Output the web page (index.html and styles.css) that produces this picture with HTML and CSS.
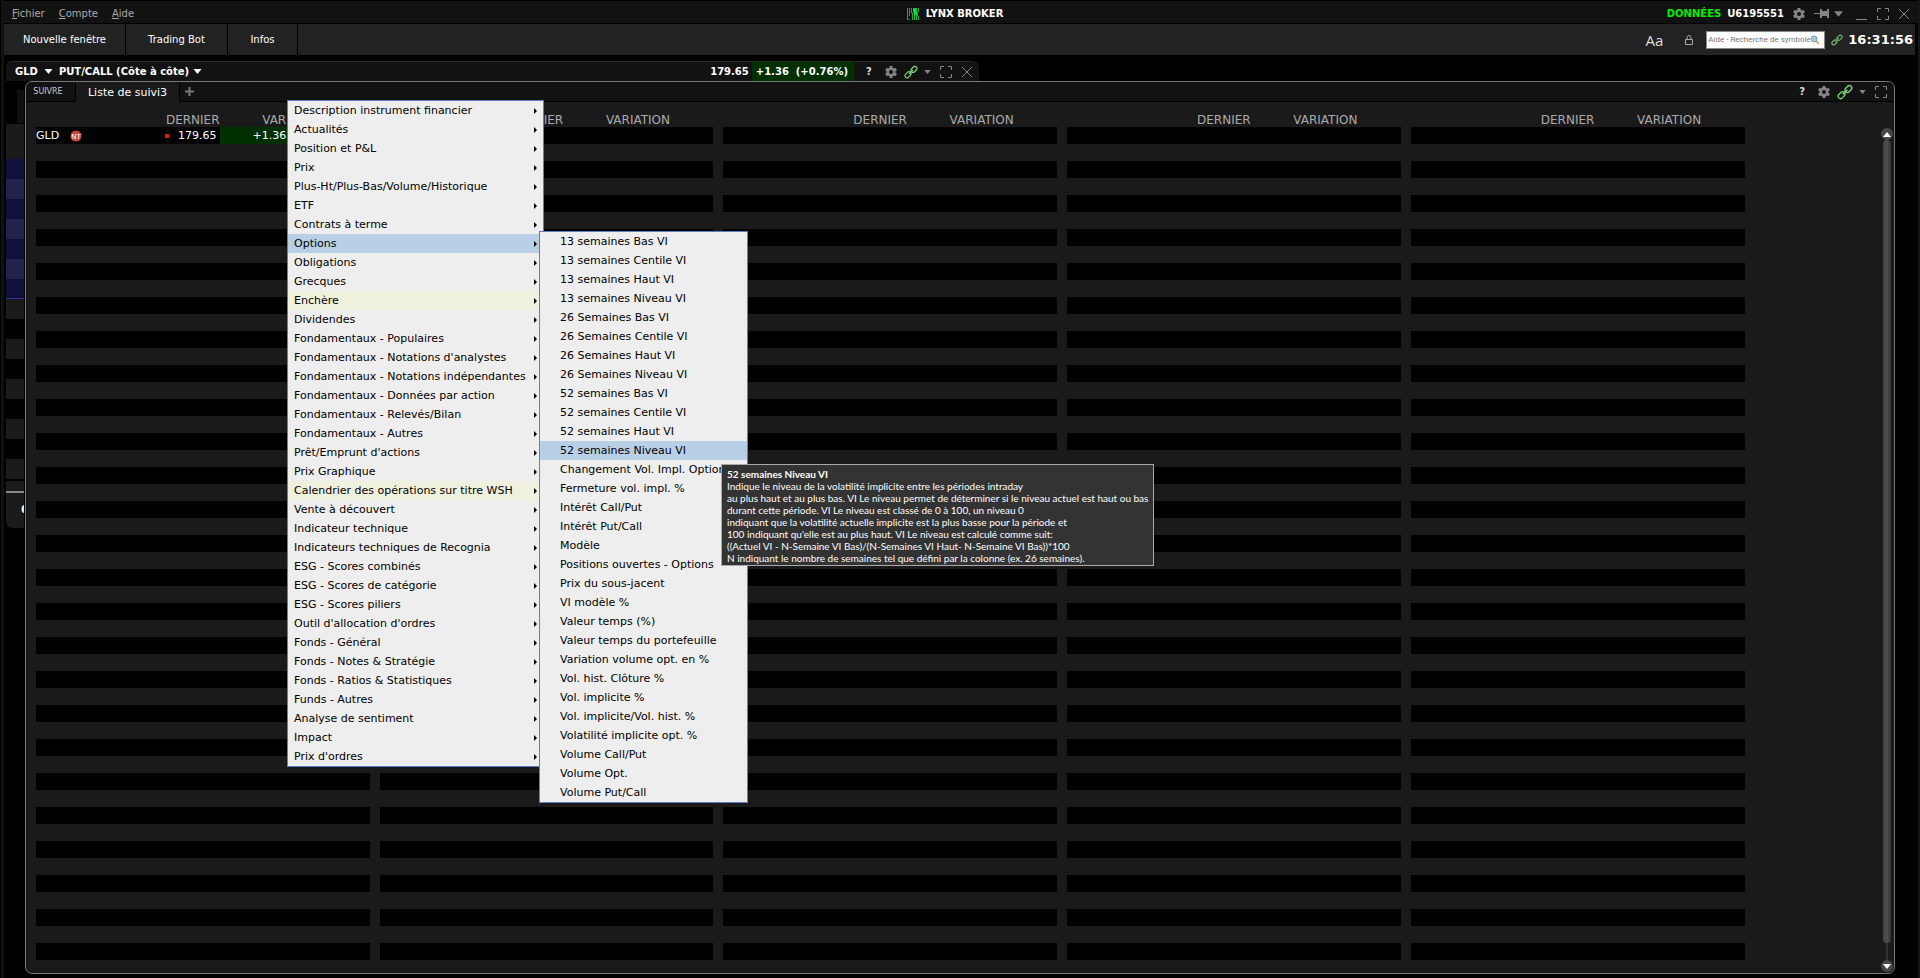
FILE: index.html
```html
<!DOCTYPE html>
<html lang="fr">
<head>
    <meta charset="UTF-8">
    <title>LYNX BROKER</title>
    <link rel="stylesheet" href="styles.css">
</head>
<body>
    <!-- shared icons -->
    <svg class="sprite" width="0" height="0">
        <symbol id="gear" viewBox="0 0 12 12">
            <g fill="#858585">
                <rect x="4.5" y="0" width="3" height="12"/>
                <rect x="4.5" y="0" width="3" height="12" transform="rotate(60 6 6)"/>
                <rect x="4.5" y="0" width="3" height="12" transform="rotate(120 6 6)"/>
            </g>
            <circle cx="6" cy="6" r="3.3" fill="none" stroke="#858585" stroke-width="2.4"/>
            <circle cx="6" cy="6" r="2" fill="#121212"/>
        </symbol>
        <symbol id="link" viewBox="0 0 16 16">
            <g fill="none" stroke="#7fd67f" stroke-width="1.3" stroke-linecap="round">
                <rect x="7.6" y="2.6" width="7.6" height="4.8" rx="2.4" transform="rotate(-45 11.4 5)"/>
                <rect x="0.8" y="8.8" width="7.6" height="4.8" rx="2.4" transform="rotate(-45 4.6 11.2)"/>
                <path d="M6 10 L10 6"/>
            </g>
        </symbol>
        <symbol id="caret" viewBox="0 0 8 5"><path d="M0 0H8L4 5Z" fill="currentColor"/></symbol>
        <symbol id="full" viewBox="0 0 12 12">
            <path d="M.5 4V.5H4M8 .5H11.5V4M11.5 8V11.5H8M4 11.5H.5V8" fill="none" stroke="#858585"/>
        </symbol>
        <symbol id="close" viewBox="0 0 12 12"><path d="M1 1L11 11M11 1L1 11" fill="none" stroke="#858585"/></symbol>
    </svg>

    <header class="titlebar">
        <nav class="menubar">
            <a href="#"><u>F</u>ichier</a>
            <a href="#"><u>C</u>ompte</a>
            <a href="#"><u>A</u>ide</a>
        </nav>
        <div class="brand">
            <svg width="12" height="12" viewBox="0 0 12 12">
                <path d="M.5 0V11.5H3M2.5 0V8M4.5 0V5H6M5.5 5V12M11.5 0V4M10.5 4V8M11.5 8V12" fill="none" stroke="#14a850"/>
                <path d="M6 0H10V12H9V7H8V12H7V4H6Z" fill="#10c040"/>
                <path d="M7 1H8V7H7Z" fill="#20f050"/>
            </svg>
            <h1>LYNX BROKER</h1>
        </div>
        <div class="account">
            <span class="live">DONNÉES</span>
            <span class="user">U6195551</span>
            <button class="icon" type="button" aria-label="Configuration"><svg width="12" height="12"><use href="#gear"/></svg></button>
            <button class="icon pin" type="button" aria-label="Épingler">
                <svg width="16" height="9" viewBox="0 0 16 9"><path d="M0 4H6V5H0ZM6 0H8V2H13V0H15V9H13V7H8V9H6Z" fill="#858585"/></svg>
                <svg width="9" height="6"><use href="#caret"/></svg>
            </button>
            <button class="icon" type="button" aria-label="Réduire"><svg width="12" height="12"><path d="M0 11.5H11" stroke="#858585"/></svg></button>
            <button class="icon" type="button" aria-label="Agrandir"><svg width="12" height="12"><use href="#full"/></svg></button>
            <button class="icon" type="button" aria-label="Fermer"><svg width="12" height="12"><use href="#close"/></svg></button>
        </div>
    </header>

    <div class="toolbar">
        <button class="tool new" type="button">Nouvelle fenêtre</button>
        <button class="tool bot" type="button">Trading Bot</button>
        <button class="tool infos" type="button">Infos</button>
        <div class="tools-right">
            <button class="icon font-size" type="button">Aa</button>
            <button class="icon" type="button" aria-label="Verrouiller">
                <svg width="8" height="10" viewBox="0 0 8 10"><path d="M.5 4.5H7.5V9.5H.5ZM2 4.5V3Q2 .5 4 .5T6 3V4.5" fill="none" stroke="#aaa"/></svg>
            </button>
            <label class="search">
                <input type="text" aria-label="Recherche" placeholder="Aide - Recherche de symbole">
                <svg width="10" height="10" viewBox="0 0 10 10">
                    <path d="M6 6L9 9" stroke="#d99a4a" stroke-width="1.6"/>
                    <circle cx="4" cy="4" r="3" fill="#a8cbe2" stroke="#7c97a8"/>
                </svg>
            </label>
            <svg width="12" height="12"><use href="#link"/></svg>
            <time class="clock">16:31:56</time>
        </div>
    </div>

    <main class="workspace">
        <div class="quotebar">
            <button class="icon symbol" type="button">GLD <svg width="9" height="5"><use href="#caret"/></svg></button>
            <button class="icon symbol" type="button">PUT/CALL (Côte à côte) <svg width="9" height="5"><use href="#caret"/></svg></button>
            <span class="last">179.65</span>
            <span class="change">+1.36&nbsp; (+0.76%)</span>
            <div class="controls">
                <button class="icon help" type="button">?</button>
                <button class="icon" type="button" aria-label="Configuration"><svg width="12" height="12"><use href="#gear"/></svg></button>
                <button class="icon linked" type="button" aria-label="Lier"><svg width="14" height="14"><use href="#link"/></svg><svg width="7" height="4"><use href="#caret"/></svg></button>
                <button class="icon" type="button" aria-label="Agrandir"><svg width="12" height="12"><use href="#full"/></svg></button>
                <button class="icon" type="button" aria-label="Fermer"><svg width="12" height="12"><use href="#close"/></svg></button>
            </div>
        </div>

        <div class="windows">
            <!-- visible edge of the option chain window -->
            <div class="chain">
                <div class="chain-head"></div>
                <div class="chain-sub"></div>
                <div class="chain-calls"></div>
                <div class="chain-puts"></div>
                <div class="chain-gap"></div>
                <div class="chain-foot">6</div>
            </div>

            <section class="panel">
                <div class="tabs">
                    <button class="tab" type="button">SUIVRE</button>
                    <button class="tab active" type="button">Liste de suivi3</button>
                    <button class="icon add" type="button" aria-label="Ajouter"><svg width="9" height="9"><path d="M4.5 0V9M0 4.5H9" stroke="#777" stroke-width="2"/></svg></button>
                    <div class="controls">
                        <button class="icon help" type="button">?</button>
                        <button class="icon" type="button" aria-label="Configuration"><svg width="12" height="12"><use href="#gear"/></svg></button>
                        <button class="icon linked" type="button" aria-label="Lier"><svg width="16" height="16"><use href="#link"/></svg><svg width="7" height="4"><use href="#caret"/></svg></button>
                        <button class="icon" type="button" aria-label="Agrandir"><svg width="12" height="12"><use href="#full"/></svg></button>
                    </div>
                </div>
                <div class="content">
                    <div class="lists" id="lists"></div>
                    <div class="scrollbar">
                        <button class="round" type="button" aria-label="Haut"><svg width="8" height="5"><path d="M0 5H8L4 0Z" fill="#fff"/></svg></button>
                        <div class="thumb"></div>
                        <div class="track"></div>
                        <button class="round" type="button" aria-label="Bas"><svg width="8" height="5"><path d="M0 0H8L4 5Z" fill="#fff"/></svg></button>
                    </div>
                </div>
            </section>
        </div>
    </main>

    <ul class="menu" id="menu"></ul>

    <div class="tooltip" role="tooltip">
        <b>52 semaines Niveau VI</b><br>
        Indique le niveau de la volatilité implicite entre les périodes intraday<br>
        au plus haut et au plus bas. VI Le niveau permet de déterminer si le niveau actuel est haut ou bas<br>
        durant cette période. VI Le niveau est classé de 0 à 100, un niveau 0<br>
        indiquant que la volatilité actuelle implicite est la plus basse pour la période et<br>
        100 indiquant qu'elle est au plus haut. VI Le niveau est calculé comme suit:<br>
        ((Actuel VI - N-Semaine VI Bas)/(N-Semaines VI Haut- N-Semaine VI Bas))*100<br>
        N indiquant le nombre de semaines tel que défini par la colonne (ex. 26 semaines).
    </div>

    <script src="script.js"></script>
</body>
</html>
```

FILE: styles.css
```css
* {
    box-sizing: border-box;
}
body {
    margin: 0;
    height: 100vh;
    display: flex;
    flex-direction: column;
    overflow: hidden;
    padding: 1px 4px 0;
    background: #000;
    border-left: 1px solid #000;
    border-right: 2px solid #151515;
    color: #fff;
    font-family: "DejaVu Sans", Verdana, sans-serif;
    font-size: 11px;
    box-shadow: inset 3px 0 #111;
}
button {
    margin: 0;
    padding: 0;
    border: 0;
    background: none;
    color: inherit;
    font: inherit;
}
svg {
    display: block;
    flex: none;
}
.sprite {
    position: absolute;
}
.icon {
    display: flex;
    align-items: center;
    color: #858585;
}

/* title bar */
.titlebar {
    display: grid;
    grid-template-columns: 1fr auto 1fr;
    align-items: center;
    flex: none;
    height: 22px;
    margin: 0 -4px;
    padding: 3px 8px 0 11px;
    background: #121212;
    font-size: 10px;
}
.menubar {
    display: flex;
    gap: 14px;
}
.menubar a {
    color: #aaa;
    text-decoration: none;
}
.brand {
    display: flex;
    align-items: center;
    gap: 7px;
    padding-right: 12px;
}
.brand h1 {
    margin: 0;
    font-size: 10px;
}
.account {
    display: flex;
    align-items: center;
    justify-content: flex-end;
    gap: 9px;
    font-weight: bold;
}
.live {
    color: #00f000;
    margin-right: -3px;
}
.pin {
    gap: 4px;
    margin-right: 4px;
}

/* toolbar */
.toolbar {
    display: flex;
    flex: none;
    height: 31px;
    margin: 1px -1px 0;
    padding-right: 2px;
    background: #222;
}
.tool {
    border-right: 1px solid #000;
    font-size: 10px;
}
.new {
    width: 122px;
}
.bot {
    width: 102px;
}
.infos {
    width: 70px;
}
.tools-right {
    display: flex;
    align-items: center;
    margin-left: auto;
}
.font-size {
    margin-right: 22px;
    color: #ddd;
    font: 15px "Open Sans", sans-serif;
}
.search {
    display: flex;
    align-items: center;
    width: 119px;
    height: 18px;
    margin: 0 6px 0 13px;
    padding: 0 4px 0 1px;
    border: 1px solid #888;
    background: #fff;
}
.search input {
    flex: 1;
    min-width: 0;
    padding: 0;
    border: 0;
    outline: 0;
    background: none;
    font: 8px Roboto, sans-serif;
}
.search input::placeholder {
    color: #777;
}
.clock {
    margin-left: 5px;
    font-size: 13px;
    font-weight: bold;
}

/* workspace */
.workspace {
    flex: 1;
    min-height: 0;
    display: flex;
    flex-direction: column;
    padding: 6px 19px 4px 1px;
}
.quotebar {
    display: flex;
    align-items: center;
    flex: none;
    width: 51.5%;
    margin-right: auto;
    height: 20px;
    padding: 0 6px 0 9px;
    border-top: 1px solid #2a2a2a;
    border-radius: 6px 8px 0 0;
    background: #121212;
    font-size: 10px;
    font-weight: bold;
}
.symbol {
    gap: 6px;
    margin-right: 6px;
    color: #fff;
}
.symbol + .symbol {
    gap: 4px;
}
.last {
    margin-left: auto;
}
.change {
    align-self: stretch;
    margin: 0 12px 0 3px;
    padding: 0 6px 0 4px;
    background: #003000;
    line-height: 19px;
}
.controls {
    display: flex;
    align-items: center;
    gap: 9px;
}
.help {
    margin-right: 4px;
    color: #ddd;
    font-size: 10px;
    font-weight: bold;
}
.linked {
    gap: 6px;
    margin-left: -2px;
}

.windows {
    flex: 1;
    min-height: 0;
    display: flex;
}
.chain {
    width: 18px;
    flex: none;
    margin-right: 1px;
}
.chain-head {
    height: 33px;
    margin: 9px 0 0 11px;
    background: #101010;
}
.chain-sub {
    height: 35px;
    margin-top: 1px;
    background: #1a1a1a;
}
.chain-calls {
    height: 140px;
    border-bottom: 1px solid #3030a0;
    background: repeating-linear-gradient(#10103c 0 20px, #22224a 20px 40px);
}
.chain-puts {
    height: 180px;
    background: repeating-linear-gradient(#1a1a1a 0 20px, #000 20px 40px);
}
.chain-gap {
    height: 12px;
    margin-top: 2px;
    border-bottom: 2px solid #888;
    background: #1a1a1a;
}
.chain-foot {
    height: 35px;
    padding-left: 15px;
    overflow: hidden;
    border-bottom-left-radius: 6px;
    background: #1a1a1a;
    font-size: 10px;
    font-weight: bold;
    line-height: 34px;
}

/* watchlist */
.panel {
    flex: 1;
    min-width: 0;
    display: flex;
    flex-direction: column;
    overflow: hidden;
    border: 1px solid #777;
    border-radius: 7px;
    background: #1a1a1a;
}
.tabs {
    display: flex;
    align-items: center;
    flex: none;
    height: 20px;
    padding-right: 7px;
    border-bottom: 1px solid #000;
    background: #121212;
}
.tab {
    width: 50px;
    height: 20px;
    padding-right: 5px;
    border-right: 1px solid #000;
    color: #ccc;
    font-size: 8px;
}
.tab.active {
    width: 104px;
    margin-bottom: -1px;
    padding: 0;
    background: #1a1a1a;
    color: #fff;
    font-size: 11px;
}
.add {
    margin-left: 5px;
}
.tabs .controls {
    margin-left: auto;
}
.content {
    flex: 1;
    min-height: 0;
    display: flex;
    justify-content: space-between;
}
.lists {
    display: grid;
    grid-template-columns: repeat(5, 1fr);
    gap: 10px;
    width: 92%;
    padding: 8px 0 0 10px;
}
.list {
    width: 100%;
    align-self: start;
    border-collapse: collapse;
    table-layout: fixed;
}
.list th,
.list td {
    height: 17px;
    padding: 0;
    text-align: right;
    line-height: 17px;
}
.list th {
    padding-top: 3px;
    color: #aaa;
    font-size: 12px;
    font-weight: normal;
    line-height: 14px;
}
.list td + td {
    padding-right: 3px;
}
.list tbody tr:nth-child(odd) {
    background: #000;
}
.list .name {
    width: 33%;
    text-align: left;
}
.list .price {
    width: 22%;
}
.list .var {
    width: 32%;
}
.list td.up {
    padding-right: 40px;
    background: #003000;
}
.ticker {
    display: flex;
    align-items: center;
    gap: 11px;
}
.tick {
    display: inline-block;
    width: 4px;
    height: 4px;
    margin: 0 9px 1px 0;
    background: #e01818;
}
.scrollbar {
    display: flex;
    flex-direction: column;
    align-items: center;
    width: 12px;
    margin: 26px 1px 1px 0;
}
.round {
    display: flex;
    align-items: center;
    justify-content: center;
    flex: none;
    width: 12px;
    height: 12px;
    border-radius: 50%;
    background: #484848;
}
.thumb {
    flex: 1;
    width: 8px;
    border-radius: 4px;
    background: linear-gradient(90deg, #444, #505050, #333);
}
.track {
    width: 2px;
    height: 17px;
    background: #333;
}

/* column menus */
.menu {
    position: absolute;
    top: 100px;
    left: 287px;
    width: 257px;
    margin: 0;
    padding: 0;
    list-style: none;
    border: 1px solid #5a7fc4;
    background: #eee;
    color: #000;
}
.menu li {
    position: relative;
}
.item {
    display: flex;
    align-items: center;
    justify-content: space-between;
    width: 100%;
    height: 19px;
    padding: 0 6px;
    white-space: nowrap;
    overflow: hidden;
}
.item::after {
    content: "";
    border-left: 3px solid #000;
    border-top: 3px solid transparent;
    border-bottom: 3px solid transparent;
}
.item.selected {
    background: #b8cfe6;
}
.item.notable {
    background: #f0f0de;
}
.submenu {
    top: -3px;
    left: 251px;
    width: 209px;
    z-index: 1;
}
.submenu .item {
    padding: 0 20px;
}
.submenu .item::after {
    display: none;
}

.tooltip {
    position: absolute;
    top: 464px;
    left: 721px;
    z-index: 2;
    padding: 3px 5px 1px;
    border: 1px solid #aaa;
    background: #333;
    font: 10px/12px Lato, "Liberation Sans", sans-serif;
    white-space: nowrap;
}
```

FILE: script.js
```js
var columns = [
    "Description instrument financier", "Actualités", "Position et P&L", "Prix",
    "Plus-Ht/Plus-Bas/Volume/Historique", "ETF", "Contrats à terme", "Options",
    "Obligations", "Grecques", "Enchère", "Dividendes", "Fondamentaux - Populaires",
    "Fondamentaux - Notations d'analystes", "Fondamentaux - Notations indépendantes",
    "Fondamentaux - Données par action", "Fondamentaux - Relevés/Bilan",
    "Fondamentaux - Autres", "Prêt/Emprunt d'actions", "Prix Graphique",
    "Calendrier des opérations sur titre WSH", "Vente à découvert",
    "Indicateur technique", "Indicateurs techniques de Recognia",
    "ESG - Scores combinés", "ESG - Scores de catégorie", "ESG - Scores piliers",
    "Outil d'allocation d'ordres", "Fonds - Général", "Fonds - Notes & Stratégie",
    "Fonds - Ratios & Statistiques", "Funds - Autres", "Analyse de sentiment",
    "Impact", "Prix d'ordres"
];
var options = [
    "13 semaines Bas VI", "13 semaines Centile VI", "13 semaines Haut VI", "13 semaines Niveau VI",
    "26 Semaines Bas VI", "26 Semaines Centile VI", "26 Semaines Haut VI", "26 Semaines Niveau VI",
    "52 semaines Bas VI", "52 semaines Centile VI", "52 semaines Haut VI", "52 semaines Niveau VI",
    "Changement Vol. Impl. Options", "Fermeture vol. impl. %", "Intérêt Call/Put",
    "Intérêt Put/Call", "Modèle", "Positions ouvertes - Options", "Prix du sous-jacent",
    "VI modèle %", "Valeur temps (%)", "Valeur temps du portefeuille",
    "Variation volume opt. en %", "Vol. hist. Clôture %", "Vol. implicite %",
    "Vol. implicite/Vol. hist. %", "Volatilité implicite opt. %", "Volume Call/Put",
    "Volume Opt.", "Volume Put/Call"
];
var selected = ["Options", "52 semaines Niveau VI"];
var notable = ["Enchère", "Calendrier des opérations sur titre WSH"];

function fillMenu(menu, labels) {
    labels.forEach(function (label) {
        var li = document.createElement("li");
        var button = document.createElement("button");
        button.type = "button";
        button.className = "item";
        button.textContent = label;
        if (selected.indexOf(label) >= 0) button.classList.add("selected");
        if (notable.indexOf(label) >= 0) button.classList.add("notable");
        li.appendChild(button);
        if (label === "Options") {
            var sub = document.createElement("ul");
            sub.className = "menu submenu";
            fillMenu(sub, options);
            li.appendChild(sub);
        }
        menu.appendChild(li);
    });
}
fillMenu(document.getElementById("menu"), columns);

// five side by side lists, only the first has an instrument
var first = '<tr><td><div class="ticker">GLD <svg width="12" height="12" viewBox="0 0 12 12">' +
    '<circle cx="6" cy="6" r="5.5" fill="#c4483c"/><text x="6" y="9" text-anchor="middle" font-size="7" fill="#fff">NT</text></svg></div></td>' +
    '<td><span class="tick"></span>179.65</td><td class="up">+1.36</td><td></td></tr>';
var empty = "<tr><td></td><td></td><td></td><td></td></tr>";
var html = "";
for (var i = 0; i < 5; i++) {
    html += '<table class="list"><thead><tr><th class="name"></th><th class="price">DERNIER</th>' +
        '<th class="var">VARIATION</th><th></th></tr></thead><tbody>' +
        (i === 0 ? first : empty) + empty.repeat(48) + "</tbody></table>";
}
document.getElementById("lists").innerHTML = html;
```
